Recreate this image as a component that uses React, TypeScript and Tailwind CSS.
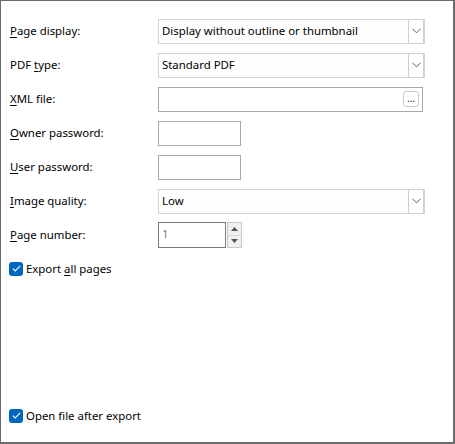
import type { ReactNode } from "react";

const FONT = { fontFamily: '"Segoe UI", "Noto Sans", "Open Sans", sans-serif' };

function Mn({ children }: { children: ReactNode }) {
  return <span className="underline underline-offset-2 decoration-1">{children}</span>;
}

function Chevron() {
  return (
    <svg width="9" height="6" viewBox="0 0 9 6" fill="none">
      <path d="M0.5 0.8 L4.5 4.8 L8.5 0.8" stroke="#606060" strokeWidth="1" />
    </svg>
  );
}

function Combo({ value }: { value: string }) {
  return (
    <div className="flex h-[25px] w-[267px] items-stretch border border-[#d4d4d4] bg-[#fdfdfd]">
      <div className="flex flex-1 items-center pl-[3px] pb-[1px] text-[11.4px] text-black">{value}</div>
      <div className="my-[-1px] flex w-[16px] items-center justify-center rounded-[2px] border border-[#cfcfcf] bg-white">
        <Chevron />
      </div>
    </div>
  );
}

function Row({ label, children }: { label: ReactNode; children: ReactNode }) {
  return (
    <div className="flex h-[34px] items-center">
      <div className="w-[157px] pl-[9px] text-[11.4px] text-black">{label}</div>
      {children}
    </div>
  );
}

function Check({ children }: { children: ReactNode }) {
  return (
    <div className="flex items-center gap-[3px] pl-[8px] text-[11.4px] text-black">
      <div className="flex h-[14px] w-[14px] items-center justify-center rounded-[3px] bg-[#0067c0]">
        <svg width="9" height="7" viewBox="0 0 9 7" fill="none">
          <path d="M0.8 3.6 L3.2 5.9 L8.2 0.9" stroke="white" strokeWidth="1.1" />
        </svg>
      </div>
      <span>{children}</span>
    </div>
  );
}

export default function App() {
  return (
    <div
      className="flex h-[444px] w-[455px] flex-col border-t border-l border-r-2 border-b-2 border-[#6b6b6b] bg-white pt-[13px]"
      style={FONT}
    >
      <Row label={<><Mn>P</Mn>age display:</>}>
        <Combo value="Display without outline or thumbnail" />
      </Row>
      <Row label={<>PDF <Mn>t</Mn>ype:</>}>
        <Combo value="Standard PDF" />
      </Row>
      <Row label={<><Mn>X</Mn>ML file:</>}>
        <div className="flex h-[25px] w-[265px] items-center justify-end border border-[#a8a8a8] bg-white pr-[3px]">
          <div className="flex h-[16px] w-[16px] items-end justify-center rounded-[3px] border border-[#c8c8c8] bg-white pb-[3px] text-[10px] leading-none text-[#333]">
            ...
          </div>
        </div>
      </Row>
      <Row label={<><Mn>O</Mn>wner password:</>}>
        <div className="h-[25px] w-[83px] border border-[#a8a8a8] bg-white" />
      </Row>
      <Row label={<><Mn>U</Mn>ser password:</>}>
        <div className="h-[25px] w-[83px] border border-[#a8a8a8] bg-white" />
      </Row>
      <Row label={<><Mn>I</Mn>mage quality:</>}>
        <Combo value="Low" />
      </Row>
      <Row label={<><Mn>P</Mn>age number:</>}>
        <div className="flex h-[26px] items-stretch">
          <div className="flex w-[68px] items-center border border-[#7a7a7a] bg-white pl-[3px] pb-[2px] text-[11.4px] text-[#7a7a7a]">
            1
          </div>
          <div className="ml-[1px] flex w-[15px] flex-col border border-[#c8c8c8] bg-[#f0f0f0]">
            <div className="flex flex-1 items-center justify-center border-b border-[#d8d8d8]">
              <svg width="7" height="4" viewBox="0 0 7 4"><path d="M0 4 L3.5 0 L7 4 Z" fill="#555" /></svg>
            </div>
            <div className="flex flex-1 items-center justify-center">
              <svg width="7" height="4" viewBox="0 0 7 4"><path d="M0 0 L3.5 4 L7 0 Z" fill="#555" /></svg>
            </div>
          </div>
        </div>
      </Row>
      <div className="flex h-[34px] items-center">
        <Check>Export <Mn>a</Mn>ll pages</Check>
      </div>
      <div className="flex-1" />
      <div className="flex h-[20px] items-center mb-[16px]">
        <Check>Open file after export</Check>
      </div>
    </div>
  );
}
